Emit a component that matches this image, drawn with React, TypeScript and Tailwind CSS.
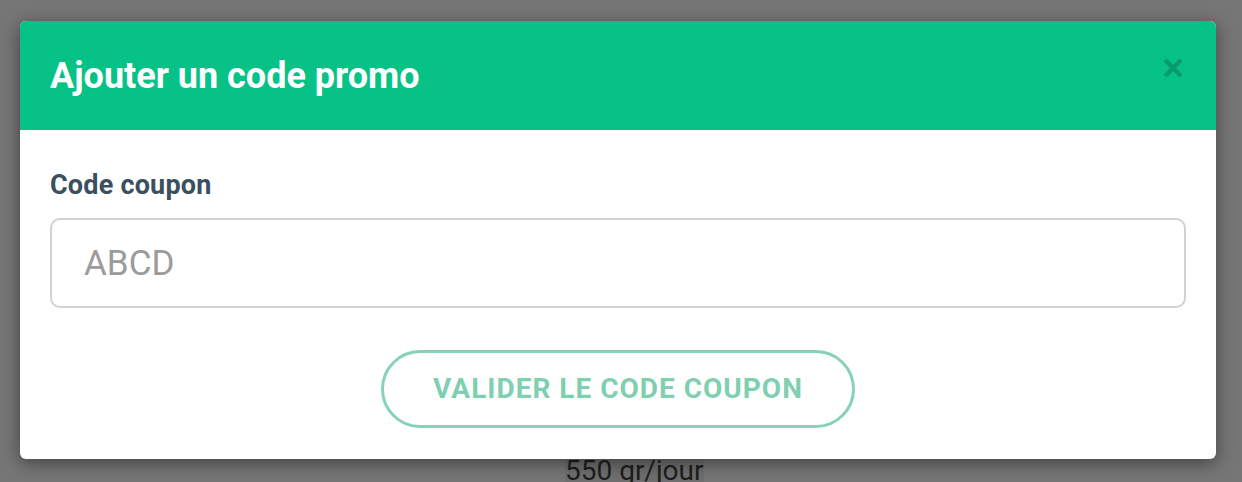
export default function App() {
  return (
    <div className="relative h-[482px] w-[1242px] overflow-hidden bg-[#767676] font-['Roboto',sans-serif]">
      {/* page content behind the overlay */}
      <div className="flex h-full flex-col justify-end">
        <p className="ml-[565px] mb-[-3px] w-max bg-[#6f6f6f] text-[28px] leading-[28px] text-[#1e1e1e]">
          550 gr/jour
        </p>
      </div>

      <div className="absolute left-[20px] top-[21px] w-[1196px] overflow-hidden rounded-[6px] bg-white shadow-[0_4px_18px_rgba(0,0,0,0.45)]">
        <div className="flex h-[109px] items-center justify-between bg-[#07c287] pl-[30px] pr-[32px]">
          <h2 className="text-[36px] font-bold leading-none text-white">Ajouter un code promo</h2>
          <button className="mb-[16px] text-[#0a9b6c]">
            <svg width="22" height="22" viewBox="0 0 22 22">
              <path d="M3 3 L19 19 M19 3 L3 19" stroke="currentColor" strokeWidth="4.5" strokeLinecap="butt" />
            </svg>
          </button>
        </div>

        <div className="px-[30px] pt-[38px] pb-[31px]">
          <label className="block text-[27px] font-bold leading-[34px] tracking-[0.2px] text-[#3b4f60]">Code coupon</label>
          <input
            placeholder="ABCD"
            className="mt-[16px] h-[90px] w-full rounded-[10px] border-2 border-[#d2d2d2] px-[32px] text-[35px] text-[#333] outline-none placeholder:text-[#9b9b9b]"
          />
          <div className="mt-[42px] flex justify-center">
            <button className="h-[78px] w-[474px] rounded-full border-[3px] border-[#86d2b7] text-[28px] font-bold tracking-[1px] text-[#7fcfb1]">
              VALIDER LE CODE COUPON
            </button>
          </div>
        </div>
      </div>
    </div>
  );
}
